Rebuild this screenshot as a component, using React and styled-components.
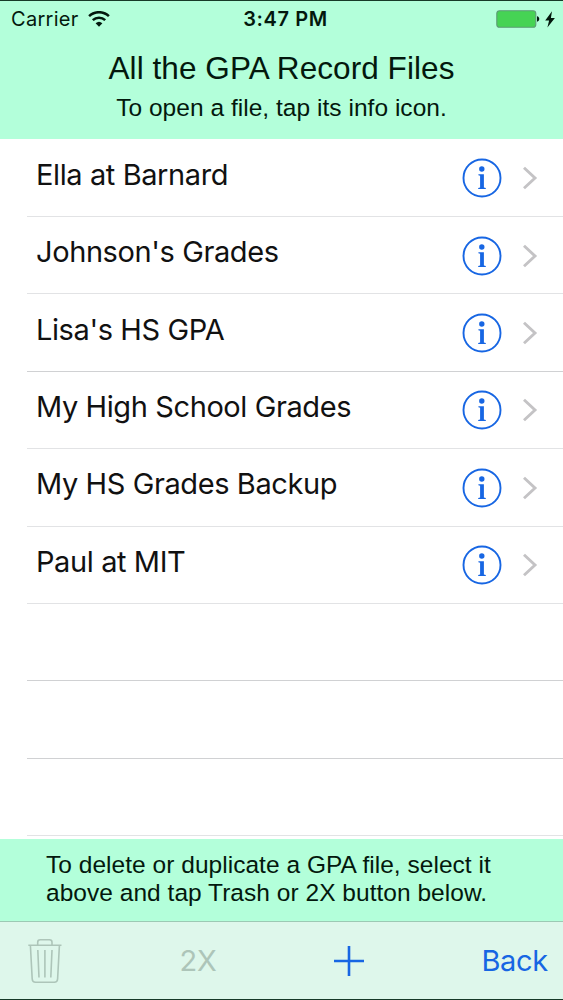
import React from "react";
import styled, { createGlobalStyle } from "styled-components";

const colors = {
  mint: "#b3ffda",
  toolbar: "#def7eb",
  blue: "#1766e3",
  ink: "#03180d",
  disabled: "#adc5b9",
};

const helvetica = `"Liberation Sans", Arial, sans-serif`;
const system = `Inter, "Liberation Sans", sans-serif`;

const GlobalStyle = createGlobalStyle`
  * {
    box-sizing: border-box;
  }
  body {
    margin: 0;
    background: #fff;
  }
`;

const Screen = styled.div`
  width: 563px;
  height: 1000px;
  display: flex;
  flex-direction: column;
  overflow: hidden;
  background: #fff;
  border-top: 1px solid #163a28;
  border-bottom: 1px solid #163a28;
`;

const Header = styled.header`
  flex: none;
  height: 138px;
  background: ${colors.mint};
  color: ${colors.ink};
`;

const StatusBar = styled.div`
  display: grid;
  grid-template-columns: 1fr auto 1fr;
  align-items: center;
  height: 36px;
  padding: 0 8px 0 11px;
  font-family: ${system};
  font-size: 20px;
`;

const StatusSide = styled.div`
  display: flex;
  align-items: center;
  justify-content: ${({ $end }) => ($end ? "flex-end" : "flex-start")};
  gap: ${({ $end }) => ($end ? "5px" : "9px")};
  letter-spacing: 0.3px;
`;

const Clock = styled.div`
  font-weight: 600;
  letter-spacing: 0.6px;
  margin-left: 5px;
`;

const Title = styled.h1`
  margin: 13px 0 0;
  font: 400 31.5px/36px ${helvetica};
  letter-spacing: 0.07px;
  text-align: center;
`;

const Subtitle = styled.p`
  margin: 7px 0 0;
  font: 400 24.5px/30px ${helvetica};
  letter-spacing: 0.03px;
  text-align: center;
`;

const List = styled.ul`
  flex: none;
  height: 700px;
  margin: 0;
  padding: 0 0 0 27px;
  list-style: none;
  overflow: hidden;
`;

const Row = styled.li`
  display: flex;
  align-items: center;
  height: 77.4px;
  padding: 1px 25px 0 9px;
  border-bottom: 1px solid ${({ $strong }) => ($strong ? "#d0d1d3" : "#e2e3e5")};

  &:first-child {
    height: 78px;
  }
`;

const FileName = styled.span`
  flex: 1;
  padding-bottom: 7px;
  font: 400 29px/36px ${system};
  letter-spacing: -0.4px;
  color: #111;
`;

const Chevron = styled.svg`
  margin-left: 19.5px;
  margin-right: 0.5px;
`;

const Hint = styled.p`
  flex: none;
  height: 82px;
  margin: 0;
  padding: 12px 0 0 46px;
  background: ${colors.mint};
  color: ${colors.ink};
  font: 400 24.5px/28px ${helvetica};
  letter-spacing: 0.03px;
  white-space: nowrap;
`;

const Toolbar = styled.footer`
  flex: 1;
  display: flex;
  align-items: center;
  justify-content: space-between;
  padding: 0 15px 0 28px;
  background: ${colors.toolbar};
  border-top: 1px solid #9cc9b4;
`;

const ToolButton = styled.button`
  display: flex;
  padding: 0;
  border: 0;
  background: none;
  font: 400 29px/36px ${system};
  letter-spacing: -0.3px;
  color: ${({ disabled }) => (disabled ? colors.disabled : colors.blue)};
`;

const WifiIcon = () => (
  <svg width="22" height="17" viewBox="0 0 22 17">
    <g fill="none" stroke={colors.ink} strokeWidth="2.5">
      <path d="M1.1 5.2a14.2 14.2 0 0 1 19.8 0" />
      <path d="M4.8 9.2a9 9 0 0 1 12.4 0" />
    </g>
    <path d="M7.6 12.3a5 5 0 0 1 6.8 0L11 15.7z" fill={colors.ink} />
  </svg>
);

const BatteryIcon = () => (
  <svg width="44" height="18" viewBox="0 0 44 18">
    <rect x="0.8" y="0.8" width="39" height="16.4" rx="2.8" fill="#46d354" stroke="#5d9c76" strokeWidth="1.1" />
    <path d="M41 6.3c3 .4 3 5 0 5.4z" fill={colors.ink} />
  </svg>
);

const BoltIcon = () => (
  <svg width="10" height="17" viewBox="0 0 10 17">
    <path d="M7 .2.2 9.4h3.9L2.4 16.6 9.9 7H5.9z" fill={colors.ink} />
  </svg>
);

const InfoIcon = () => (
  <svg width="40" height="40" viewBox="0 0 40 40">
    <circle cx="20" cy="20" r="18.5" fill="none" stroke={colors.blue} strokeWidth="1.9" />
    <g fill={colors.blue}>
      <circle cx="19.8" cy="11" r="2.7" />
      <path d="M16.4 16.3h5.5v13.2l1.9.4v1h-7.6v-1l1.9-.4V17.7l-1.7-.4z" />
    </g>
  </svg>
);

const TrashIcon = () => (
  <svg width="34" height="46" viewBox="0 0 34 46">
    <g fill="none" stroke={colors.disabled} strokeWidth="1.6">
      <path d="M.3 7.3h33.2M9.7 7V4.2q0-2.4 2.5-2.4h9.3q2.5 0 2.5 2.4V7" />
      <path d="M2.4 7.5 4.2 41q.2 3.3 3.3 3.3h18.8q3.1 0 3.3-3.3L31.4 7.5" />
      <path d="M9.8 12 11 39.5M16.9 12v27.5M24 12l-1.2 27.5" />
    </g>
  </svg>
);

const files = [
  "Ella at Barnard",
  "Johnson's Grades",
  "Lisa's HS GPA",
  "My High School Grades",
  "My HS Grades Backup",
  "Paul at MIT",
  "",
  "",
  "",
];

const FileRow = ({ name, strong }) => (
  <Row $strong={strong}>
    {name && (
      <>
        <FileName>{name}</FileName>
        <InfoIcon />
        <Chevron width="16" height="24" viewBox="0 0 16 24">
          <path d="M2 1.8 13 12 2 22.2" fill="none" stroke="#c4c3c5" strokeWidth="2.9" />
        </Chevron>
      </>
    )}
  </Row>
);

export default function App() {
  return (
    <Screen>
      <GlobalStyle />
      <Header>
        <StatusBar>
          <StatusSide>
            Carrier
            <WifiIcon />
          </StatusSide>
          <Clock>3:47 PM</Clock>
          <StatusSide $end>
            <BatteryIcon />
            <BoltIcon />
          </StatusSide>
        </StatusBar>
        <Title>All the GPA Record Files</Title>
        <Subtitle>To open a file, tap its info icon.</Subtitle>
      </Header>
      <List>
        {files.map((name, i) => (
          <FileRow key={i} name={name} strong={[2, 6, 7].includes(i)} />
        ))}
      </List>
      <Hint>
        To delete or duplicate a GPA file, select it
        <br />
        above and tap Trash or 2X button below.
      </Hint>
      <Toolbar>
        <ToolButton disabled aria-label="Trash">
          <TrashIcon />
        </ToolButton>
        <ToolButton disabled>2X</ToolButton>
        <ToolButton aria-label="Add">
          <svg width="30" height="30" viewBox="0 0 30 30">
            <path d="M15 0v30M0 15h30" stroke={colors.blue} strokeWidth="2.6" />
          </svg>
        </ToolButton>
        <ToolButton>Back</ToolButton>
      </Toolbar>
    </Screen>
  );
}
